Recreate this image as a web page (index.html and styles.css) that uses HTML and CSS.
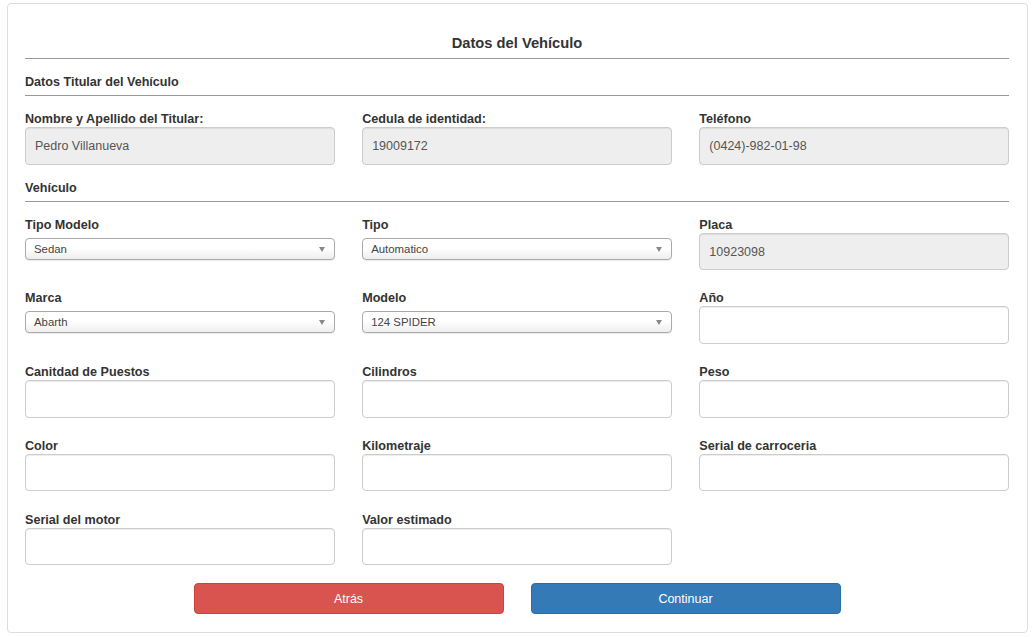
FILE: index.html
```html
<!DOCTYPE html>
<html lang="es">
<head>
<meta charset="utf-8">
<title>Datos del Vehículo</title>
<link rel="stylesheet" href="styles.css">
</head>
<body>
<div class="card">
  <h2 class="title">Datos del Vehículo</h2>
  <hr class="rule">
  <h3 class="section">Datos Titular del Vehículo</h3>
  <hr class="rule">
  <div class="grid">
    <div class="field">
      <label class="label">Nombre y Apellido del Titular:</label>
      <div class="input disabled">Pedro Villanueva</div>
    </div>
    <div class="field">
      <label class="label">Cedula de identidad:</label>
      <div class="input disabled">19009172</div>
    </div>
    <div class="field">
      <label class="label">Teléfono</label>
      <div class="input disabled">(0424)-982-01-98</div>
    </div>
  </div>
  <h3 class="section sec2">Vehículo</h3>
  <hr class="rule">
  <div class="grid rows">
    <div class="field">
      <label class="label">Tipo Modelo</label>
      <div class="select"><span>Sedan</span><i class="arrow"></i></div>
    </div>
    <div class="field">
      <label class="label">Tipo</label>
      <div class="select"><span>Automatico</span><i class="arrow"></i></div>
    </div>
    <div class="field">
      <label class="label">Placa</label>
      <div class="input disabled">10923098</div>
    </div>

    <div class="field">
      <label class="label">Marca</label>
      <div class="select"><span>Abarth</span><i class="arrow"></i></div>
    </div>
    <div class="field">
      <label class="label">Modelo</label>
      <div class="select"><span>124 SPIDER</span><i class="arrow"></i></div>
    </div>
    <div class="field">
      <label class="label">Año</label>
      <div class="input"></div>
    </div>

    <div class="field">
      <label class="label">Canitdad de Puestos</label>
      <div class="input"></div>
    </div>
    <div class="field">
      <label class="label">Cilindros</label>
      <div class="input"></div>
    </div>
    <div class="field">
      <label class="label">Peso</label>
      <div class="input"></div>
    </div>

    <div class="field">
      <label class="label">Color</label>
      <div class="input"></div>
    </div>
    <div class="field">
      <label class="label">Kilometraje</label>
      <div class="input"></div>
    </div>
    <div class="field">
      <label class="label">Serial de carroceria</label>
      <div class="input"></div>
    </div>

    <div class="field">
      <label class="label">Serial del motor</label>
      <div class="input"></div>
    </div>
    <div class="field">
      <label class="label">Valor estimado</label>
      <div class="input"></div>
    </div>
  </div>
  <div class="actions">
    <button class="btn btn-danger">Atrás</button>
    <button class="btn btn-primary">Continuar</button>
  </div>
</div>
</body>
</html>
```

FILE: styles.css
```css
* { box-sizing: border-box; }
html, body { margin: 0; padding: 0; background: #fff; }
body {
  padding: 3px 0 0 7px;
  font-family: "Liberation Sans", Arial, sans-serif;
  color: #333;
}
.card {
  width: 1021px;
  height: 630px;
  border: 1px solid #ddd;
  border-radius: 4px;
  padding: 29px 18px 0 17px;
}
.title {
  margin: 0 0 5px;
  font-size: 14.7px;
  line-height: 20px;
  font-weight: bold;
  text-align: center;
}
.rule {
  margin: 0;
  border: 0;
  border-top: 1px solid #999;
  height: 0;
}
.section {
  margin: 13px 0 5px;
  padding-top: 2px;
  font-size: 12.6px;
  line-height: 16px;
  font-weight: bold;
}
.sec2 { margin-top: 13px; }
.grid {
  display: grid;
  grid-template-columns: 1fr 1fr 1fr;
  column-gap: 27.5px;
  margin-top: 13px;
}
.rows { row-gap: 18.3px; }
.field { display: flex; flex-direction: column; }
.label {
  display: block;
  padding-top: 2px;
  font-size: 12.6px;
  line-height: 16px;
  font-weight: bold;
  color: #333;
}
.input {
  height: 37.5px;
  border: 1px solid #ccc;
  border-radius: 4px;
  background: #fff;
  box-shadow: inset 0 1px 1px rgba(0,0,0,0.075);
  padding: 1px 9px 0;
  font-size: 12.5px;
  line-height: 35px;
  color: #555;
}
.input.disabled { background: #eee; }
.select {
  position: relative;
  margin-top: 5px;
  height: 22px;
  border: 1px solid #aaa;
  border-radius: 4px;
  background: linear-gradient(to bottom, #fff 0%, #fff 45%, #eee 100%);
  box-shadow: 0 1px 1px rgba(0,0,0,0.08);
  padding: 0 8px;
  font-size: 11.4px;
  line-height: 20px;
  color: #444;
}
.arrow {
  position: absolute;
  right: 9px;
  top: 8px;
  width: 0;
  height: 0;
  border-left: 3.5px solid transparent;
  border-right: 3.5px solid transparent;
  border-top: 5px solid #888;
}
.actions {
  display: flex;
  justify-content: center;
  gap: 27px;
  margin-top: 18px;
}
.btn {
  width: 310px;
  height: 31px;
  border: 1px solid transparent;
  border-radius: 4px;
  font-family: "Liberation Sans", Arial, sans-serif;
  font-size: 12.5px;
  color: #fff;
  padding: 0;
}
.btn-danger { background: #d9534f; border-color: #d43f3a; }
.btn-primary { background: #337ab7; border-color: #2e6da4; }
```
